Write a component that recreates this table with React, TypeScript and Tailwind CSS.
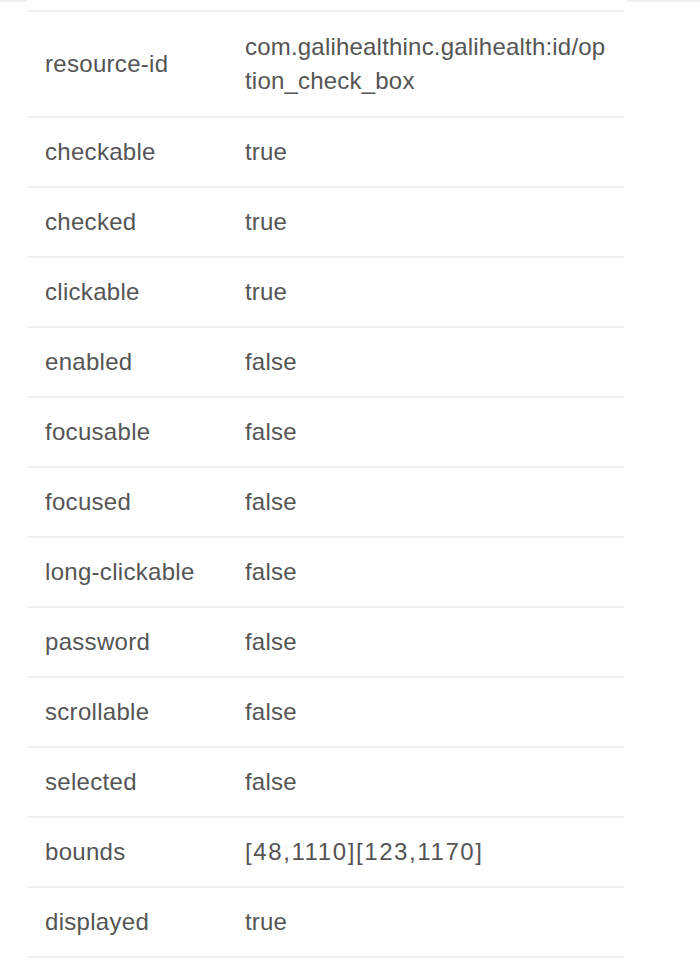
const rows: [string, string][] = [
  ['resource-id', 'com.galihealthinc.galihealth:id/option_check_box'],
  ['checkable', 'true'],
  ['checked', 'true'],
  ['clickable', 'true'],
  ['enabled', 'false'],
  ['focusable', 'false'],
  ['focused', 'false'],
  ['long-clickable', 'false'],
  ['password', 'false'],
  ['scrollable', 'false'],
  ['selected', 'false'],
  ['bounds', '[48,1110][123,1170]'],
  ['displayed', 'true'],
];

const App = () => {
  return (
    <div className="w-[700px] h-[972px] bg-white overflow-hidden font-['Liberation_Sans',Arial,sans-serif] text-[#555555]">
      <div className="flex h-[2px]">
        <div className="w-[27px] bg-[#f0f0f0]" />
        <div className="flex-1" />
        <div className="w-[73px] bg-[#f0f0f0]" />
      </div>
      <div className="ml-[28px] mt-[8px] w-[596px] border-b-2 border-[#eeeeee]">
        {rows.map(([key, value], i) => (
          <div key={key} className="grid grid-cols-[200px_1fr] border-t-2 border-[#eeeeee]">
            <div className="flex items-center px-[17px] py-[17px] text-[24px] leading-[34px] tracking-[0.3px]">
              {key}
            </div>
            <div
              className={
                i === 0
                  ? 'px-[17px] py-[18px] text-[24px] leading-[34px] tracking-[0.2px] break-all'
                  : key === 'bounds'
                    ? 'px-[17px] py-[17px] text-[24px] leading-[34px] tracking-[1.6px]'
                    : 'px-[17px] py-[17px] text-[24px] leading-[34px] tracking-[0.2px]'
              }
            >
              {value}
            </div>
          </div>
        ))}
      </div>
    </div>
  );
};

export default App;
